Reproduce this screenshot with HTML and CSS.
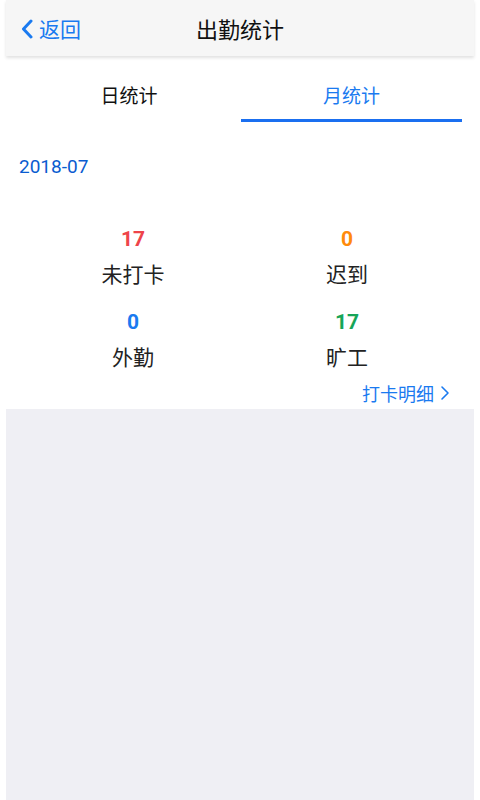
FILE: index.html
```html
<!DOCTYPE html>
<html lang="zh">
<head>
<meta charset="utf-8">
<link rel="stylesheet" href="styles.css">
</head>
<body>
<div class="page">
  <header class="navbar">
    <div class="back">
      <svg class="chev" width="12" height="20" viewBox="0 0 12 20"><path d="M10 2 L2.5 10 L10 18" fill="none" stroke="#1a7af0" stroke-width="3" stroke-linecap="round" stroke-linejoin="round"/></svg>
      <span>返回</span>
    </div>
    <div class="title">出勤统计</div>
  </header>
  <div class="tabs">
    <div class="tab">日统计</div>
    <div class="tab active">月统计</div>
  </div>
  <div class="month">2018-07</div>
  <div class="stats">
    <div class="cell"><div class="num red">17</div><div class="label">未打卡</div></div>
    <div class="cell"><div class="num orange">0</div><div class="label">迟到</div></div>
    <div class="cell"><div class="num blue">0</div><div class="label">外勤</div></div>
    <div class="cell"><div class="num green">17</div><div class="label">旷工</div></div>
  </div>
  <div class="detail-row">
    <span class="detail">打卡明细<svg class="arrow" width="10" height="16" viewBox="0 0 10 16"><path d="M2 2 L8 8 L2 14" fill="none" stroke="#1a7af0" stroke-width="1.6" stroke-linecap="round" stroke-linejoin="round"/></svg></span>
  </div>
  <div class="filler"></div>
</div>
</body>
</html>
```

FILE: styles.css
```css
html, body {
  margin: 0;
  padding: 0;
  background: #ffffff;
}
body {
  padding: 0 6px;
  font-family: "Noto Sans CJK SC", "Noto Sans", sans-serif;
}
.page {
  display: flex;
  flex-direction: column;
  min-height: 800px;
}
.navbar {
  position: relative;
  height: 56px;
  background: #f6f6f6;
  box-shadow: 0 2px 3px rgba(0, 0, 0, 0.12);
  display: flex;
  align-items: center;
  justify-content: center;
  z-index: 1;
}
.back {
  position: absolute;
  left: 15px;
  top: 0;
  height: 56px;
  display: flex;
  align-items: center;
  gap: 6px;
  color: #1a7af0;
  font-size: 21px;
}
.back span {
  line-height: 28px;
}
.chev {
  margin-top: 1px;
}
.title {
  font-size: 22px;
  color: #111;
  line-height: 28px;
}
.tabs {
  display: grid;
  grid-template-columns: 1fr 1fr;
  padding: 0 12px;
}
.tab {
  text-align: center;
  font-size: 19px;
  line-height: 30px;
  padding-top: 24px;
  padding-bottom: 9px;
  border-bottom: 3px solid transparent;
  color: #111;
}
.tab.active {
  color: #1a7af0;
  border-bottom-color: #1a6ff0;
  margin-left: 1px;
}
.month {
  margin-top: 33px;
  padding-left: 13px;
  font-family: Roboto, "Noto Sans", sans-serif;
  font-size: 19px;
  line-height: 24px;
  color: #0a5cd0;
}
.stats {
  margin-top: 45px;
  display: grid;
  grid-template-columns: 1fr 1fr;
  row-gap: 19px;
  padding: 0 20px;
}
.cell {
  display: flex;
  flex-direction: column;
  align-items: center;
  gap: 4px;
}
.num {
  font-family: Roboto, "Noto Sans", sans-serif;
  font-weight: 700;
  font-size: 21px;
  line-height: 30px;
}
.label {
  font-size: 21px;
  line-height: 30px;
  color: #222;
}
.red { color: #ee4449; }
.orange { color: #ff8a0a; }
.blue { color: #1a7af0; }
.green { color: #17a558; }
.detail-row {
  display: flex;
  justify-content: flex-end;
  padding: 9px 24px 3px 0;
}
.detail {
  display: flex;
  align-items: center;
  gap: 6px;
  font-size: 18px;
  line-height: 26px;
  color: #1a7af0;
}
.filler {
  flex: 1;
  background: #efeff4;
}
```
